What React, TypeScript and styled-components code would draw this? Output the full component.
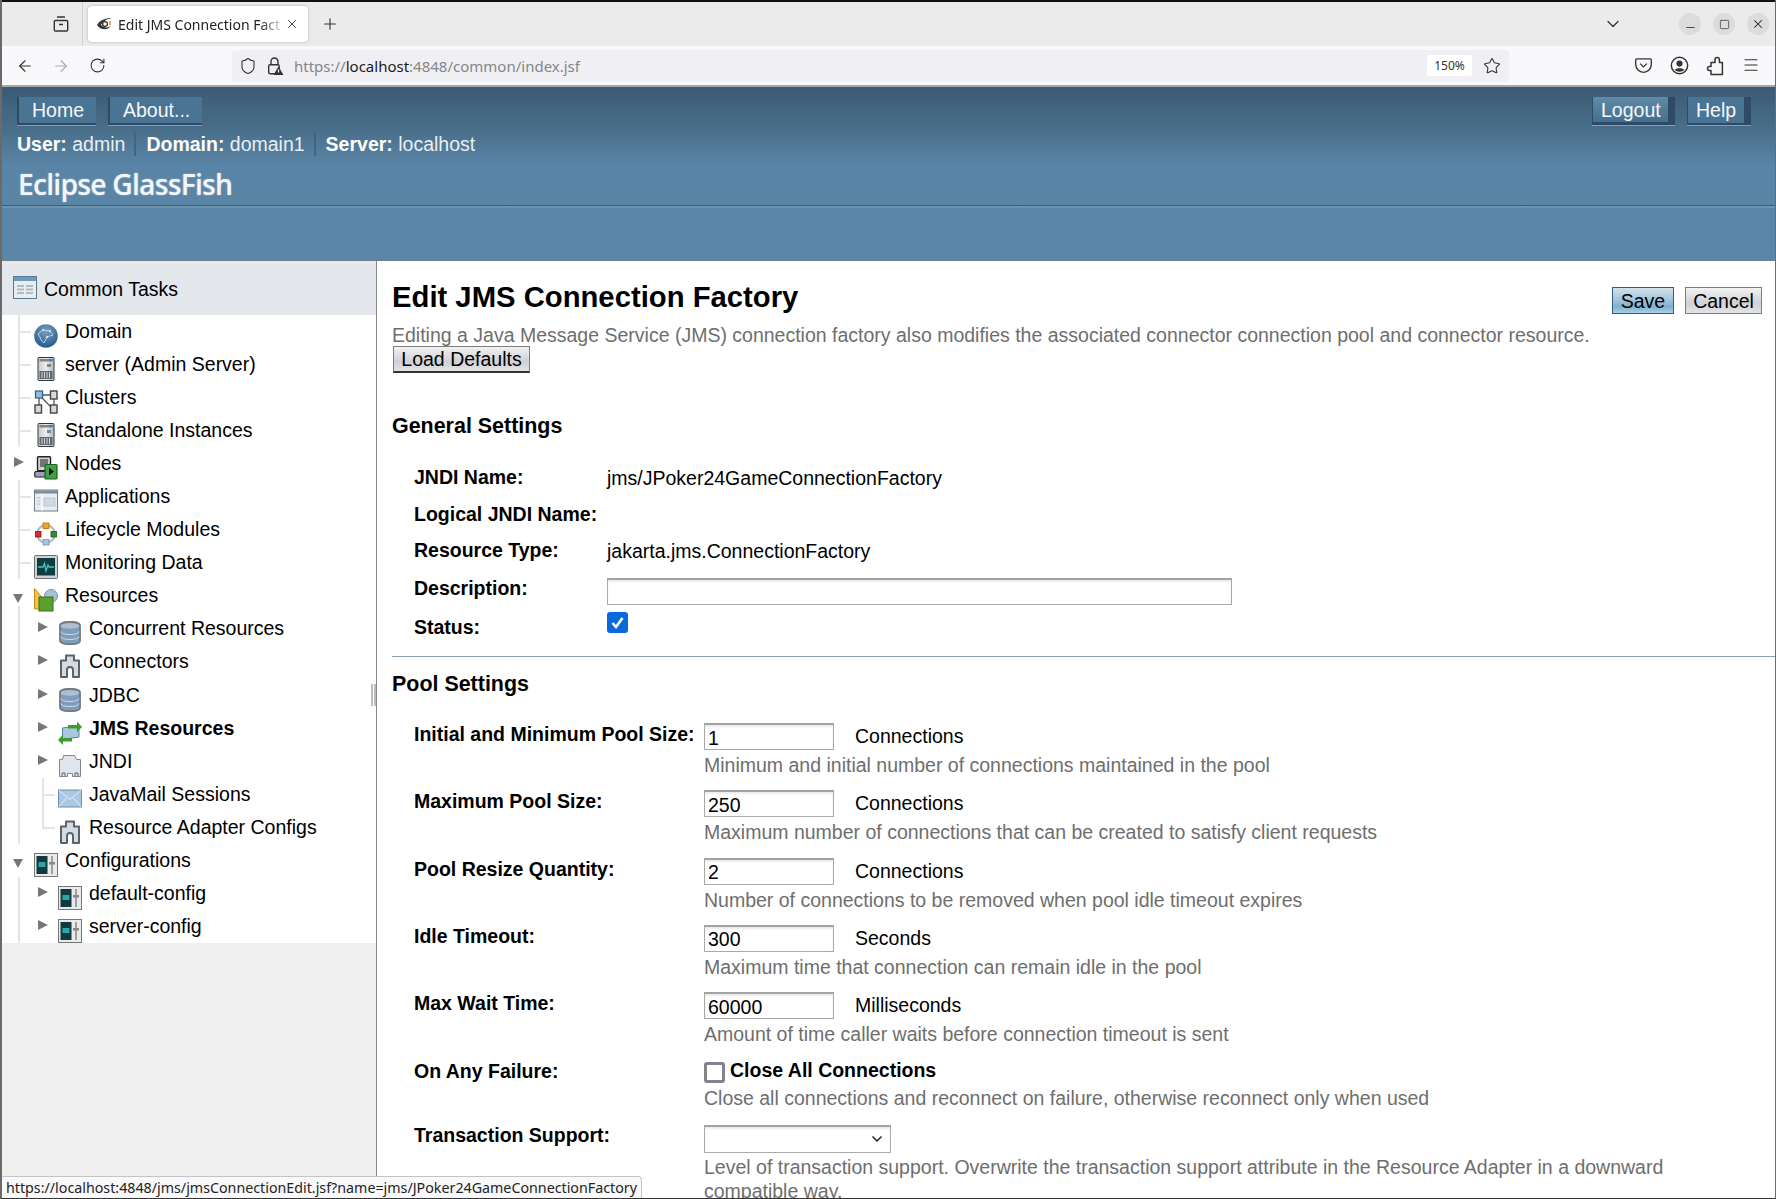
import React from "react";
import styled, { createGlobalStyle } from "styled-components";
import {
  ArrowLeft,
  ArrowRight,
  ChevronDown,
  Menu,
  Minus,
  Plus,
  RotateCw,
  Shield,
  Square,
  Star,
  X,
} from "lucide-react";

const GlobalStyle = createGlobalStyle`
  html, body { margin: 0; padding: 0; background: #fff; }
  body { font-family: "Liberation Sans", Arial, sans-serif; font-size: 19.5px; color: #000; }
  * { box-sizing: border-box; }
`;

const Window = styled.div`
  position: relative;
  width: 1776px;
  height: 1199px;
  overflow: hidden;
  display: flex;
  flex-direction: column;
  border-left: 2px solid #6a6a6a;
  border-right: 1px solid #6a6a6a;
  border-bottom: 1px solid #333;
  background: #fff;
`;

/* browser chrome */
const TabStrip = styled.div`
  height: 46px;
  flex: none;
  display: flex;
  align-items: center;
  background: #ebebeb;
  border-top: 2px solid #111;
  color: #333;
`;
const TabTool = styled.div`
  width: 81px;
  height: 100%;
  display: flex;
  align-items: center;
  justify-content: flex-end;
  padding-right: 12px;
  border-right: 1px solid #d0d0d0;
`;
const Tab = styled.div`
  width: 220px;
  height: 36px;
  margin-left: 5px;
  padding: 0 9px 0 8px;
  display: flex;
  align-items: center;
  background: #fff;
  border-radius: 4px;
  box-shadow: 0 0 3px rgba(0, 0, 0, 0.25);
  font-family: "Noto Sans", sans-serif;
  font-size: 14px;
  color: #222;
`;
const TabTitle = styled.span`
  flex: 1;
  margin-left: 5px;
  overflow: hidden;
  white-space: nowrap;
  -webkit-mask-image: linear-gradient(to right, #000 85%, transparent);
  mask-image: linear-gradient(to right, #000 85%, transparent);
`;
const NewTab = styled.div`
  margin-left: 13px;
  display: flex;
`;
const StripEnd = styled.div`
  margin-left: auto;
  display: flex;
  align-items: center;
  padding-right: 6px;
`;
const TabList = styled.div`
  display: flex;
  margin-right: 44px;
`;
const WinButton = styled.div<{ $low?: boolean }>`
  width: 22px;
  height: 22px;
  margin-left: 12px;
  padding-top: ${(p) => (p.$low ? 6 : 0)}px;
  border-radius: 50%;
  background: #dcdcdc;
  display: flex;
  align-items: center;
  justify-content: center;
  color: #2c2c2c;
`;
const Toolbar = styled.div`
  height: 41px;
  flex: none;
  display: flex;
  align-items: center;
  background: #f9f9fb;
  border-bottom: 2px solid #a8a8a8;
  color: #333;
`;
const ToolIcon = styled.div<{ $w: number; $dim?: boolean }>`
  width: ${(p) => p.$w}px;
  display: flex;
  justify-content: center;
  color: ${(p) => (p.$dim ? "#a9a9ad" : "#333")};
`;
const NavIcons = styled.div`
  display: flex;
  width: 230px;
  padding-left: 5px;
`;
const UrlBar = styled.div`
  width: 1277px;
  height: 32px;
  display: flex;
  align-items: center;
  padding: 0 1px 0 6px;
  background: #f0f0f4;
  border-radius: 4px;
`;
const UrlText = styled.div`
  margin-left: 2px;
  flex: 1;
  font-family: "Noto Sans", sans-serif;
  font-size: 15px;
  color: #85858a;
  white-space: nowrap;
`;
const UrlHost = styled.span`
  color: #1c1b22;
`;
const ZoomChip = styled.div`
  width: 45px;
  height: 21px;
  margin-right: 4px;
  background: #fff;
  border-radius: 3px;
  font-family: "Noto Sans", sans-serif;
  font-size: 12px;
  line-height: 21px;
  text-align: center;
  color: #333;
`;
const RightTools = styled.div`
  display: flex;
  margin-left: 116px;
`;

/* console banner */
const Banner = styled.header`
  height: 174px;
  flex: none;
  display: flex;
  flex-direction: column;
  padding-top: 10px;
  background: linear-gradient(#3a5a75 0, #4a6f8b 44px, #5a84a5 78px, #5c86a7 100%);
  border-bottom: 1px solid #717f8a;
  color: #fff;
`;
const BannerNav = styled.div`
  display: flex;
  justify-content: space-between;
  padding: 0 24px 0 15px;
`;
const NavGroup = styled.div`
  display: flex;
  gap: 12px;
`;
const NavButton = styled.a<{ $side: "left" | "right"; $w: number }>`
  width: ${(p) => p.$w}px;
  height: 28px;
  display: block;
  padding-left: ${(p) => (p.$side === "left" ? 13 : 8)}px;
  line-height: 26px;
  color: #f4f7fa;
  background: #4a7493;
  border-style: solid;
  border-color: #2e4a66;
  border-width: ${(p) => (p.$side === "left" ? "0 0 2px 2px" : "0 7px 2px 1px")};
  box-shadow: 0 1px 0 #7fa0b8;
`;
const LogoutButton = styled(NavButton)`
  background: linear-gradient(#5f8aa8, #44708f);
  border-bottom-width: 3px;
`;
const InfoRow = styled.div`
  display: flex;
  height: 24px;
  margin-top: 7px;
  padding-left: 15px;
  line-height: 24px;
  color: #e9eff4;
`;
const InfoItem = styled.div<{ $divided?: boolean }>`
  padding-right: 9px;
  margin-right: 10px;
  border-right: ${(p) => (p.$divided ? "2px solid #42657f" : "none")};
  white-space: nowrap;
`;
const Strong = styled.b`
  color: #fff;
`;
const Brand = styled.div`
  height: 38px;
  margin-top: 9px;
  padding-left: 16px;
  font-family: "Open Sans", sans-serif;
  font-size: 28.3px;
  font-weight: 600;
  line-height: 38px;
  letter-spacing: -0.8px;
  color: #f3f6f8;
  text-shadow: 0 0 2px rgba(255, 255, 255, 0.4);
`;
const BannerRule = styled.div`
  height: 3px;
  margin-top: 2px;
  border-top: 1px solid #3d5e76;
  background: #6f94ae;
`;

const Body = styled.div`
  flex: 1;
  min-height: 0;
  display: flex;
`;

/* left tree */
const Sidebar = styled.aside`
  position: relative;
  width: 375px;
  flex: none;
  background: #f0f0f0;
  border-right: 1px solid #8a8a8a;
`;
const TreeHead = styled.div`
  height: 54px;
  display: flex;
  align-items: center;
  padding: 0 0 0 11px;
  background: #e4e7ec;
`;
const TreeHeadLabel = styled.span`
  margin-left: 7px;
  margin-top: 2px;
`;
const Tree = styled.div`
  background: #fff;
`;
const TreeRow = styled.div<{ $level: number; $rail: boolean }>`
  position: relative;
  height: 33.05px;
  display: flex;
  padding-left: ${(p) => (p.$level === 1 ? 11 : 35)}px;
  line-height: 33px;
  white-space: nowrap;

  &::before {
    content: "";
    display: ${(p) => (p.$rail ? "block" : "none")};
    position: absolute;
    left: 16px;
    top: 0;
    bottom: 0;
    width: 2px;
    background: #e4e4e4;
  }
`;
const Expander = styled.span<{ $open?: boolean }>`
  position: relative;
  z-index: 1;
  width: 12px;
  height: ${(p) => (p.$open ? 27 : 24)}px;
  flex: none;
  margin-left: -1px;
  margin-right: 1px;
  background: #fff;

  &::after {
    content: "";
    position: absolute;
    ${(p) =>
      p.$open
        ? `left: 1px; top: 15px; border-left: 5.5px solid transparent; border-right: 5.5px solid transparent; border-top: 9px solid #777;`
        : `left: 2px; top: 10px; border-top: 5.5px solid transparent; border-bottom: 5.5px solid transparent; border-left: 10px solid #777;`}
  }
`;
const TwigSpace = styled.span`
  position: relative;
  width: 12px;
  flex: none;
`;
const Twig = styled.span<{ $level: number; $kind: string }>`
  position: absolute;
  left: 5px;
  top: 16px;
  width: 13px;
  height: 2px;
  background: #e4e4e4;

  &::before {
    content: "";
    display: ${(p) => (p.$level === 2 ? "block" : "none")};
    position: absolute;
    left: 0;
    top: -16px;
    width: 2px;
    height: ${(p) => (p.$kind === "last" ? 16 : 33)}px;
    background: #e4e4e4;
  }
`;
const IconBox = styled.span`
  width: 24px;
  height: 24px;
  flex: none;
  margin: 9px 7px 0 9px;
  display: block;
`;
const TreeLabel = styled.span<{ $bold?: boolean }>`
  font-weight: ${(p) => (p.$bold ? 700 : 400)};
`;
const SplitHandle = styled.div`
  position: absolute;
  right: 0;
  top: 423px;
  width: 5px;
  height: 22px;
  border-left: 2px solid #bdbdbd;
  border-right: 2px solid #bdbdbd;
`;

/* page content */
const Main = styled.main`
  flex: 1;
  min-width: 0;
  padding: 0 12px 0 15px;
  overflow: hidden;
`;
const TitleRow = styled.div`
  display: flex;
  justify-content: space-between;
  padding-top: 21px;
`;
const PageTitle = styled.h1`
  margin: 0;
  font-size: 29.25px;
  line-height: 31px;
  font-weight: 700;
`;
const TitleActions = styled.div`
  display: flex;
  gap: 11px;
  margin-top: 5px;
  margin-right: 1px;
`;
const Button = styled.button<{ $primary?: boolean; $w: number }>`
  width: ${(p) => p.$w}px;
  height: 27px;
  padding: 0;
  font: inherit;
  line-height: 24px;
  color: #000;
  border-radius: 0;
  border: 1px solid ${(p) => (p.$primary ? "#2f5f84" : "#7d7d7d")};
  background: ${(p) =>
    p.$primary
      ? "linear-gradient(#d3e1ea, #a6c6da 45%, #7fb0d0 75%, #a9d0e8)"
      : "linear-gradient(#f2f2f2, #cfd1d7 60%, #e2e3e6)"};
`;
const LoadButton = styled(Button)`
  display: block;
  margin: -1px 0 0 1px;
  border-bottom: 2px solid #333;
`;
const PageHelp = styled.p`
  margin: 9px 0 0;
  line-height: 24px;
  color: #6e6e6e;
  white-space: nowrap;
`;
const SectionTitle = styled.h2<{ $top: number }>`
  margin: ${(p) => p.$top}px 0 0;
  font-size: 21.45px;
  line-height: 26px;
  font-weight: 700;
`;
const GeneralGrid = styled.div`
  margin: 20px 0 0 22px;
`;
const GeneralRow = styled.div<{ $h: number }>`
  display: grid;
  grid-template-columns: 193px 1fr;
  height: ${(p) => p.$h}px;
`;
const FieldLabel = styled.label`
  font-weight: 700;
  line-height: 36px;
  white-space: nowrap;
`;
const StaticValue = styled.div`
  line-height: 38px;
`;
const TextInput = styled.input<{ $w: number }>`
  width: ${(p) => p.$w}px;
  height: 27px;
  padding: 2px 3px 0;
  font: inherit;
  color: #000;
  background: #fff;
  border: 1px solid #a9a9a9;
  border-top: 2px solid #a2a2a2;
  border-radius: 0;
  box-shadow: inset 0 2px 2px #ececec;
  outline: none;
`;
const DescInput = styled(TextInput)`
  margin-top: 8px;
  display: block;
`;
const Check = styled.input`
  appearance: none;
  width: 21px;
  height: 21px;
  margin: 3px 0 0;
  display: block;
  border-radius: 3px;
  background: #fff;
  border: 3px solid #82828e;

  &:checked {
    border: none;
    background: #0b69dc url("data:image/svg+xml,%3Csvg xmlns='http://www.w3.org/2000/svg' viewBox='0 0 21 21'%3E%3Cpath d='M5.5 11l3.5 4 6.5-9' fill='none' stroke='white' stroke-width='2.6'/%3E%3C/svg%3E");
  }
`;
const Rule = styled.hr`
  margin: 0 -12px 0 0;
  border: none;
  height: 1px;
  background: #8aa0ae;
`;
const PoolGrid = styled.div`
  margin: 25px 0 0 22px;
`;
const PoolRow = styled.div<{ $h: number }>`
  display: grid;
  grid-template-columns: 290px 1fr;
  height: ${(p) => p.$h}px;
`;
const PoolLabel = styled.label`
  font-weight: 700;
  line-height: 24px;
  white-space: nowrap;
`;
const FieldLine = styled.div`
  display: flex;
  align-items: center;
  height: 27px;
  margin-top: 1px;
`;
const Unit = styled.span`
  margin-left: 21px;
`;
const Help = styled.div`
  margin-top: 3px;
  line-height: 24px;
  color: #6e6e6e;
`;
const CheckField = styled.div`
  display: flex;
  align-items: center;
  height: 24px;
`;
const CloseCheck = styled(Check)`
  margin: 4px 5px 0 0;
`;
const CheckText = styled.span`
  font-weight: 700;
`;
const Select = styled.select`
  appearance: none;
  display: block;
  width: 187px;
  height: 28px;
  padding: 0;
  margin-top: 2px;
  border: 1px solid #a9a9a9;
  border-top: 2px solid #a2a2a2;
  border-radius: 0;
  box-shadow: inset 0 2px 2px #ececec;
  background: #fff url("data:image/svg+xml,%3Csvg xmlns='http://www.w3.org/2000/svg' viewBox='0 0 12 8'%3E%3Cpath d='M1.5 1.5L6 6l4.5-4.5' fill='none' stroke='%23222' stroke-width='1.5'/%3E%3C/svg%3E") no-repeat right 7px center / 12px 8px;
`;
const SelectHelp = styled(Help)`
  max-width: 1050px;
  margin-top: 2px;
`;

const StatusTip = styled.div`
  position: absolute;
  left: 0;
  bottom: 0;
  width: 640px;
  height: 22px;
  padding-left: 4px;
  background: #f9f9fb;
  border: 1px solid #c4c4c4;
  border-left: none;
  border-bottom: none;
  border-top-right-radius: 4px;
  font-family: "Noto Sans", sans-serif;
  font-size: 14.25px;
  line-height: 22px;
  color: #222;
  white-space: nowrap;
`;

const Drawer = () => (
  <svg width="18" height="18" viewBox="0 0 18 18" fill="none" stroke="#333" strokeWidth="1.4">
    <path d="M5 2h8M3.500 5.500h11a1.200 1.200 0 0 1 1.200 1.200v8.100a1.200 1.200 0 0 1-1.200 1.200h-11a1.200 1.200 0 0 1-1.200-1.200V6.700a1.200 1.200 0 0 1 1.200-1.200zM7 9.500h4" />
  </svg>
);
const Favicon = () => (
  <svg width="17" height="16" viewBox="0 0 17 16">
    <path d="M1 9C4 4 9 2 16 2c-5 1-9 3-11 7 3 3 7 3 10 1-3 4-10 5-14-1z" fill="#333" />
    <circle cx="9" cy="8" r="2.400" fill="none" stroke="#333" strokeWidth="1.3" />
    <path d="M14 5v4" stroke="#e58a1f" strokeWidth="1.5" />
  </svg>
);
const LockWarn = () => (
  <svg width="18" height="20" viewBox="0 0 18 20">
    <path d="M5 9V5.500a3.500 3.500 0 0 1 7 0V9" fill="none" stroke="#333" strokeWidth="1.4" />
    <rect x="2.700" y="8.700" width="10.500" height="9" rx="1.500" fill="none" stroke="#333" strokeWidth="1.4" />
    <path d="M12.500 10.500l5 8.500h-10z" fill="#333" />
    <path d="M12.500 13.500v3" stroke="#fff" strokeWidth="1.2" />
  </svg>
);
const Pocket = () => (
  <svg width="19" height="19" viewBox="0 0 20 20" fill="none" stroke="#333" strokeWidth="1.4">
    <path d="M3 3h14a1.200 1.200 0 0 1 1.200 1.200V9A8.200 8.200 0 0 1 1.800 9V4.200A1.200 1.200 0 0 1 3 3z" />
    <path d="M6.500 8l3.500 3.500L13.500 8" />
  </svg>
);
const Account = () => (
  <svg width="19" height="19" viewBox="0 0 20 20">
    <circle cx="10" cy="10" r="8.600" fill="none" stroke="#333" strokeWidth="1.5" />
    <circle cx="10" cy="8" r="3.200" fill="#333" />
    <path d="M4.800 14.500c2-2.200 8.400-2.200 10.400 0-2.500 2.800-7.900 2.800-10.400 0z" fill="#333" />
  </svg>
);
const Extensions = () => (
  <svg width="19" height="20" viewBox="0 0 19 20" fill="none" stroke="#333" strokeWidth="1.5" strokeLinejoin="round">
    <path d="M5 6.500h4V3.800a2.200 2.200 0 0 1 4.400 0v2.700h3v12H5v-4H3.500a2 2 0 0 1 0-4H5z" />
  </svg>
);

const TableIcon = () => (
  <svg width="24" height="24" viewBox="0 0 24 24">
    <rect x="0.500" y="0.500" width="23" height="22" fill="#e8edf2" stroke="#5b7a92" />
    <rect x="1" y="1" width="22" height="4" fill="#6f99b8" />
    <g fill="#b4bbc2">
      <rect x="4" y="9" width="7" height="2" /><rect x="13" y="9" width="7" height="2" />
      <rect x="4" y="12.500" width="7" height="2" /><rect x="13" y="12.500" width="7" height="2" />
      <rect x="4" y="16" width="7" height="2" /><rect x="13" y="16" width="7" height="2" />
    </g>
  </svg>
);

const icons: Record<string, React.ReactNode> = {
  globe: (
    <>
      <defs>
        <radialGradient id="gl" cx="50%" cy="30%" r="75%">
          <stop offset="0" stopColor="#7b9fbf" />
          <stop offset="0.6" stopColor="#41739e" />
          <stop offset="1" stopColor="#17588d" />
        </radialGradient>
      </defs>
      <circle cx="12" cy="12" r="11.800" fill="url(#gl)" />
      <path d="M4 10l5-4 7 1 3 4-6 2-3 6-3-3-1-3z" fill="none" stroke="#cfdeea" strokeWidth="0.8" />
      <circle cx="9" cy="6" r="1" fill="#e3edf5" />
      <circle cx="16" cy="7" r="1" fill="#e3edf5" />
      <circle cx="13" cy="13" r="1" fill="#e3edf5" />
    </>
  ),
  server: (
    <>
      <defs>
        <linearGradient id="sv" x1="0" y1="0" x2="1" y2="0">
          <stop offset="0" stopColor="#c6cacd" />
          <stop offset="0.5" stopColor="#eceeef" />
          <stop offset="1" stopColor="#b5b9bc" />
        </linearGradient>
      </defs>
      <rect x="4" y="0.500" width="16" height="23" rx="1" fill="url(#sv)" stroke="#33383c" />
      <rect x="5.500" y="2" width="13" height="2.500" fill="#7f858a" />
      <rect x="15.500" y="2" width="3" height="2" fill="#3c7fc0" />
      <rect x="13" y="7" width="4" height="3" fill="#80858a" />
      <rect x="5.500" y="14" width="13" height="8" fill="#62676c" />
      <path d="M8 15v6M10.500 15v6M13 15v6M15.500 15v6" stroke="#d5d8da" />
    </>
  ),
  clusters: (
    <>
      <path d="M8 5h9M7 7l10 10M5 8v7M20 8v7" stroke="#555" strokeWidth="1.3" fill="none" />
      <rect x="1.500" y="1" width="7" height="7" fill="#8cc0ea" stroke="#3c5a74" strokeWidth="1.2" />
      <rect x="16.500" y="1" width="6.500" height="8" fill="#d7dbde" stroke="#444" strokeWidth="1.4" />
      <rect x="1" y="15" width="6.500" height="8" fill="#d7dbde" stroke="#444" strokeWidth="1.4" />
      <rect x="16.500" y="15" width="6.500" height="8" fill="#d7dbde" stroke="#444" strokeWidth="1.4" />
    </>
  ),
  nodes: (
    <>
      <rect x="3.500" y="0.800" width="13" height="14" rx="1" fill="#d0d4d7" stroke="#222" strokeWidth="1.4" />
      <rect x="6" y="3" width="8" height="8" fill="#6e757a" />
      <rect x="0.800" y="15.500" width="13" height="5.500" rx="1" fill="#a79ac2" stroke="#222" strokeWidth="1.200" />
      <rect x="11" y="8.500" width="12" height="14.500" rx="1" fill="#3fa344" stroke="#1d5c23" strokeWidth="1.200" />
      <path d="M15 11.500l5 4-5 4z" fill="#111" />
    </>
  ),
  apps: (
    <>
      <rect x="0.500" y="1" width="23" height="21" fill="#e6ecf2" stroke="#6d7d8a" />
      <rect x="1" y="1.500" width="22" height="3" fill="#7e8d99" />
      <path d="M8 5v17" stroke="#fff" />
      <rect x="10" y="9" width="11" height="8" fill="#cfdae4" stroke="#b0bec9" strokeWidth="0.7" />
      <path d="M3 9h3M3 12h3M3 15h3" stroke="#b0bec9" />
    </>
  ),
  lifecycle: (
    <>
      <circle cx="12" cy="12" r="8.800" fill="none" stroke="#aebbc6" strokeWidth="2.200" />
      <rect x="9" y="1" width="6" height="5.500" fill="#f3a51d" stroke="#b86f00" strokeWidth="0.8" />
      <rect x="1.500" y="9.500" width="5.500" height="5.500" fill="#d92b2b" stroke="#8f1414" strokeWidth="0.8" />
      <rect x="17" y="9.500" width="5.500" height="5.500" fill="#2f8f2f" stroke="#185e18" strokeWidth="0.8" />
      <rect x="9" y="17.500" width="6" height="5.500" fill="#a9c6de" stroke="#6e8fa8" strokeWidth="0.8" />
    </>
  ),
  monitor: (
    <>
      <rect x="0.500" y="0.500" width="23" height="23" rx="1" fill="#cfd2d4" stroke="#6c6f72" />
      <rect x="3" y="3" width="18" height="17.500" fill="#123c40" />
      <path d="M4 12h5l1.500-3.500L12 16l2-6 1 2h5" fill="none" stroke="#38c9c9" strokeWidth="1.300" />
    </>
  ),
  resources: (
    <>
      <path d="M0.500 0.500L12 14v7H0.500z" fill="#f6c04e" stroke="#c98a14" />
      <circle cx="17" cy="8" r="6.500" fill="#a8c0d4" stroke="#7a94a8" />
      <rect x="5" y="9" width="14" height="14" fill="#5aa02c" stroke="#35701a" />
    </>
  ),
  db: (
    <>
      <path d="M2 4.500c0-5 20-5 20 0v15c0 5-20 5-20 0z" fill="#7f9dbd" stroke="#74797e" strokeWidth="1.800" />
      <path d="M2.800 5c0 3.600 18.400 3.600 18.400 0s-18.400-3.600-18.400 0z" fill="#aebfd0" />
      <path d="M2.800 10.500c0 4 18.400 4 18.400 0M2.800 15.500c0 4 18.400 4 18.400 0" fill="none" stroke="#d0dbe5" strokeWidth="1" />
    </>
  ),
  connector: (
    <>
      <path
        d="M8 1.500h8v5h5v16.500h-6v-7a3 3 0 0 0-6 0v7H3V6.500h5z"
        fill="#d5dbe0"
        stroke="#59636b"
        strokeWidth="2"
        strokeLinejoin="round"
      />
    </>
  ),
  jms: (
    <>
      <path d="M4.500 7L21 4.500v11.500L4.500 18.500z" fill="#a9c7e0" stroke="#5e7e98" />
      <path d="M10 4h9V0.500L24 6l-5 5V7.500h-9z" fill="#3e9b2e" />
      <path d="M14 17H5v-3.500L0 19l5 5v-3.500h9z" fill="#3e9b2e" />
    </>
  ),
  jndi: (
    <>
      <path d="M5.500 1.500h11l2 4H22.500v17h-8v-3h-5v3h-8v-17h3z" fill="#dfe5ea" stroke="#7b8a96" />
      <path d="M4 22v-3h3v3M17 22v-3h3v3" fill="none" stroke="#5a646c" />
    </>
  ),
  mail: (
    <>
      <rect x="0.500" y="3" width="23" height="17" fill="#a9c8e4" stroke="#6d8fad" />
      <path d="M1 3.500l11 9 11-9M1 19.500l8-9M23 19.500l-8-9" fill="none" stroke="#e3eef7" />
    </>
  ),
  config: (
    <>
      <rect x="0.500" y="0.500" width="23" height="23" fill="#e8eaec" stroke="#777" />
      <rect x="2.500" y="3" width="11" height="18" fill="#12393f" />
      <rect x="4.500" y="9" width="7" height="5" fill="#2aa6a8" />
      <path d="M18 3v18" stroke="#777" strokeWidth="1.300" />
      <rect x="15" y="9" width="6" height="2.500" fill="#888" />
    </>
  ),
};

type TreeItem = {
  label: string;
  icon: string;
  level: number;
  rail?: boolean;
  twig?: string;
  exp?: "open" | "closed";
  bold?: boolean;
};

const tree: TreeItem[] = [
  { label: "Domain", icon: "globe", level: 1, rail: true, twig: "mid" },
  { label: "server (Admin Server)", icon: "server", level: 1, rail: true, twig: "mid" },
  { label: "Clusters", icon: "clusters", level: 1, rail: true, twig: "mid" },
  { label: "Standalone Instances", icon: "server", level: 1, rail: true, twig: "mid" },
  { label: "Nodes", icon: "nodes", level: 1, exp: "closed" },
  { label: "Applications", icon: "apps", level: 1, rail: true, twig: "mid" },
  { label: "Lifecycle Modules", icon: "lifecycle", level: 1, rail: true, twig: "mid" },
  { label: "Monitoring Data", icon: "monitor", level: 1, rail: true, twig: "mid" },
  { label: "Resources", icon: "resources", level: 1, rail: true, exp: "open" },
  { label: "Concurrent Resources", icon: "db", level: 2, rail: true, exp: "closed" },
  { label: "Connectors", icon: "connector", level: 2, rail: true, exp: "closed" },
  { label: "JDBC", icon: "db", level: 2, rail: true, exp: "closed" },
  { label: "JMS Resources", icon: "jms", level: 2, rail: true, exp: "closed", bold: true },
  { label: "JNDI", icon: "jndi", level: 2, rail: true, exp: "closed" },
  { label: "JavaMail Sessions", icon: "mail", level: 2, rail: true, twig: "mid" },
  { label: "Resource Adapter Configs", icon: "connector", level: 2, rail: true, twig: "last" },
  { label: "Configurations", icon: "config", level: 1, exp: "open" },
  { label: "default-config", icon: "config", level: 2, rail: true, exp: "closed" },
  { label: "server-config", icon: "config", level: 2, rail: true, exp: "closed" },
];

const poolRows = [
  {
    label: "Initial and Minimum Pool Size:",
    value: "1",
    unit: "Connections",
    help: "Minimum and initial number of connections maintained in the pool",
  },
  {
    label: "Maximum Pool Size:",
    value: "250",
    unit: "Connections",
    help: "Maximum number of connections that can be created to satisfy client requests",
  },
  {
    label: "Pool Resize Quantity:",
    value: "2",
    unit: "Connections",
    help: "Number of connections to be removed when pool idle timeout expires",
  },
  {
    label: "Idle Timeout:",
    value: "300",
    unit: "Seconds",
    help: "Maximum time that connection can remain idle in the pool",
  },
  {
    label: "Max Wait Time:",
    value: "60000",
    unit: "Milliseconds",
    help: "Amount of time caller waits before connection timeout is sent",
  },
];

const BrowserChrome = () => (
  <>
    <TabStrip>
      <TabTool>
        <Drawer />
      </TabTool>
      <Tab>
        <Favicon />
        <TabTitle>Edit JMS Connection Fact</TabTitle>
        <X size={14} strokeWidth={1.5} />
      </Tab>
      <NewTab>
        <Plus size={18} strokeWidth={1.5} />
      </NewTab>
      <StripEnd>
        <TabList>
          <ChevronDown size={20} strokeWidth={1.5} />
        </TabList>
        <WinButton $low>
          <Minus size={13} strokeWidth={1.5} />
        </WinButton>
        <WinButton>
          <Square size={11} strokeWidth={1.5} />
        </WinButton>
        <WinButton>
          <X size={14} strokeWidth={1.8} />
        </WinButton>
      </StripEnd>
    </TabStrip>
    <Toolbar>
      <NavIcons>
        <ToolIcon $w={36}>
          <ArrowLeft size={18} strokeWidth={1.5} />
        </ToolIcon>
        <ToolIcon $w={36} $dim>
          <ArrowRight size={18} strokeWidth={1.5} />
        </ToolIcon>
        <ToolIcon $w={36}>
          <RotateCw size={17} strokeWidth={1.5} />
        </ToolIcon>
      </NavIcons>
      <UrlBar>
        <ToolIcon $w={20}>
          <Shield size={18} strokeWidth={1.5} />
        </ToolIcon>
        <ToolIcon $w={34}>
          <LockWarn />
        </ToolIcon>
        <UrlText>
          https://<UrlHost>localhost</UrlHost>:4848/common/index.jsf
        </UrlText>
        <ZoomChip>150%</ZoomChip>
        <ToolIcon $w={32}>
          <Star size={18} strokeWidth={1.4} />
        </ToolIcon>
      </UrlBar>
      <RightTools>
        <ToolIcon $w={36}>
          <Pocket />
        </ToolIcon>
        <ToolIcon $w={36}>
          <Account />
        </ToolIcon>
        <ToolIcon $w={36}>
          <Extensions />
        </ToolIcon>
        <ToolIcon $w={36}>
          <Menu size={18} strokeWidth={1.5} />
        </ToolIcon>
      </RightTools>
    </Toolbar>
  </>
);

const ConsoleBanner = () => (
  <Banner>
    <BannerNav>
      <NavGroup>
        <NavButton $side="left" $w={79}>Home</NavButton>
        <NavButton $side="left" $w={94}>About...</NavButton>
      </NavGroup>
      <NavGroup>
        <LogoutButton $side="right" $w={83}>Logout</LogoutButton>
        <NavButton $side="right" $w={64}>Help</NavButton>
      </NavGroup>
    </BannerNav>
    <InfoRow>
      <InfoItem $divided>
        <Strong>User:</Strong> admin
      </InfoItem>
      <InfoItem $divided>
        <Strong>Domain:</Strong> domain1
      </InfoItem>
      <InfoItem>
        <Strong>Server:</Strong> localhost
      </InfoItem>
    </InfoRow>
    <Brand>Eclipse GlassFish</Brand>
    <BannerRule />
  </Banner>
);

const NavTree = () => (
  <Sidebar>
    <TreeHead>
      <TableIcon />
      <TreeHeadLabel>Common Tasks</TreeHeadLabel>
    </TreeHead>
    <Tree>
      {tree.map((item) => (
        <TreeRow key={item.label} $level={item.level} $rail={!!item.rail}>
          {item.exp ? (
            <Expander $open={item.exp === "open"} />
          ) : (
            <TwigSpace>
              {item.twig && <Twig $level={item.level} $kind={item.twig} />}
            </TwigSpace>
          )}
          <IconBox>
            <svg width="24" height="24" viewBox="0 0 24 24">
              {icons[item.icon]}
            </svg>
          </IconBox>
          <TreeLabel $bold={item.bold}>{item.label}</TreeLabel>
        </TreeRow>
      ))}
    </Tree>
    <SplitHandle />
  </Sidebar>
);

const App = () => (
  <Window>
    <GlobalStyle />
    <BrowserChrome />
    <ConsoleBanner />
    <Body>
      <NavTree />
      <Main>
        <TitleRow>
          <PageTitle>Edit JMS Connection Factory</PageTitle>
          <TitleActions>
            <Button $primary $w={62}>Save</Button>
            <Button $w={77}>Cancel</Button>
          </TitleActions>
        </TitleRow>
        <PageHelp>
          Editing a Java Message Service (JMS) connection factory also modifies the associated
          connector connection pool and connector resource.
        </PageHelp>
        <LoadButton $w={137}>Load Defaults</LoadButton>

        <SectionTitle $top={40}>General Settings</SectionTitle>
        <GeneralGrid>
          <GeneralRow $h={37}>
            <FieldLabel>JNDI Name:</FieldLabel>
            <StaticValue>jms/JPoker24GameConnectionFactory</StaticValue>
          </GeneralRow>
          <GeneralRow $h={36}>
            <FieldLabel>Logical JNDI Name:</FieldLabel>
            <StaticValue />
          </GeneralRow>
          <GeneralRow $h={38}>
            <FieldLabel>Resource Type:</FieldLabel>
            <StaticValue>jakarta.jms.ConnectionFactory</StaticValue>
          </GeneralRow>
          <GeneralRow $h={39}>
            <FieldLabel>Description:</FieldLabel>
            <div>
              <DescInput $w={625} />
            </div>
          </GeneralRow>
          <GeneralRow $h={47}>
            <FieldLabel>Status:</FieldLabel>
            <div>
              <Check type="checkbox" defaultChecked />
            </div>
          </GeneralRow>
        </GeneralGrid>
        <Rule />

        <SectionTitle $top={14}>Pool Settings</SectionTitle>
        <PoolGrid>
          {poolRows.map((row) => (
            <PoolRow key={row.label} $h={67.33}>
              <PoolLabel>{row.label}</PoolLabel>
              <div>
                <FieldLine>
                  <TextInput $w={130} defaultValue={row.value} />
                  <Unit>{row.unit}</Unit>
                </FieldLine>
                <Help>{row.help}</Help>
              </div>
            </PoolRow>
          ))}
          <PoolRow $h={64}>
            <PoolLabel>On Any Failure:</PoolLabel>
            <div>
              <CheckField>
                <CloseCheck type="checkbox" />
                <CheckText>Close All Connections</CheckText>
              </CheckField>
              <Help>
                Close all connections and reconnect on failure, otherwise reconnect only when used
              </Help>
            </div>
          </PoolRow>
          <PoolRow $h={90}>
            <PoolLabel>Transaction Support:</PoolLabel>
            <div>
              <Select />
              <SelectHelp>
                Level of transaction support. Overwrite the transaction support attribute in the
                Resource Adapter in a downward compatible way.
              </SelectHelp>
            </div>
          </PoolRow>
        </PoolGrid>
      </Main>
    </Body>
    <StatusTip>https://localhost:4848/jms/jmsConnectionEdit.jsf?name=jms/JPoker24GameConnectionFactory</StatusTip>
  </Window>
);

export default App;
